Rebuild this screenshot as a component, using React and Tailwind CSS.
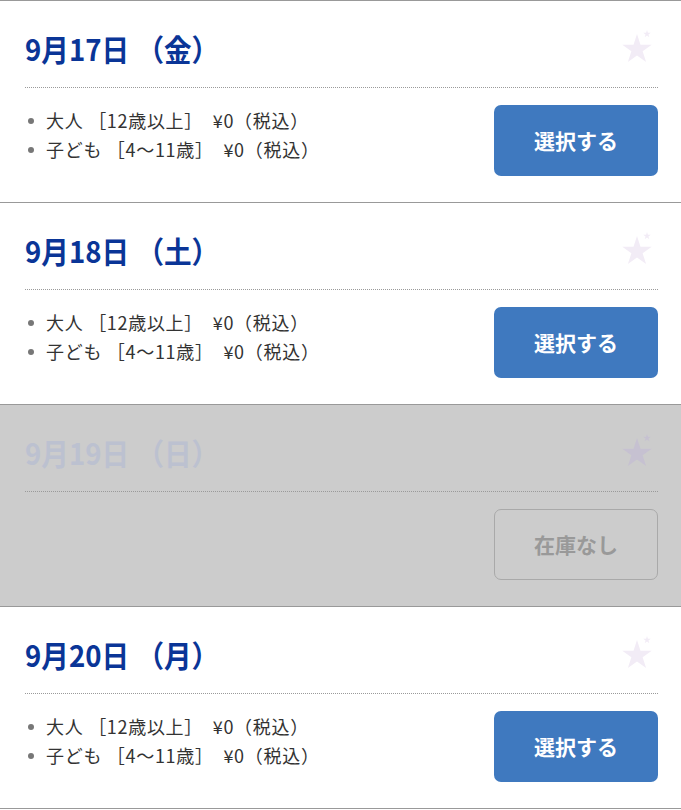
import React from 'react';

const days = [
  { date: '9月17日', week: '（金）', available: true },
  { date: '9月18日', week: '（土）', available: true },
  { date: '9月19日', week: '（日）', available: false },
  { date: '9月20日', week: '（月）', available: true },
];

const prices = ['大人 ［12歳以上］　¥0（税込）', '子ども ［4〜11歳］　¥0（税込）'];

// star mark on the right of each date
const Star = ({ color }) => (
  <svg width="34" height="36" viewBox="0 0 34 36" aria-hidden="true">
    <polygon
      points="17,6 20.48,16.71 31.74,16.71 22.63,23.33 26.11,34.04 17,27.42 7.89,34.04 11.37,23.33 2.26,16.71 13.52,16.71"
      fill={color}
    />
    <polygon
      points="27,2 27.9,4.76 30.8,4.76 28.46,6.47 29.35,9.24 27,7.53 24.65,9.24 25.54,6.47 23.2,4.76 26.1,4.76"
      fill={color}
    />
  </svg>
);

const DayCard = ({ date, week, available }) => (
  <div
    className={`${available ? 'bg-white' : 'bg-[#cccccc]'} border-t border-[#999999] pl-[25px] pr-[23px] pt-[26px] pb-[26px]`}
  >
    <div className="flex items-center justify-between h-[42px]">
      <h2
        className={`${available ? 'text-[#0a3597]' : 'text-[#bcc1d0]'} text-[30px] font-bold leading-[42px] whitespace-nowrap origin-left scale-x-[0.92]`}
      >
        {date}
        <span className="ml-[8px]">{week}</span>
      </h2>
      <div className="mr-[4px] -mt-[4px]">
        <Star color={available ? '#f2ecf6' : '#c6c1d1'} />
      </div>
    </div>
    <div className="mt-[18px] border-t border-dotted border-[#9a9a9a]" />
    <div className="mt-[17px] flex items-start justify-between">
      <ul className="pt-[1px]">
        {available &&
          prices.map((p) => (
            <li
              key={p}
              className="flex items-center text-[18px] leading-[29px] tracking-[0.7px] text-[#333333] whitespace-pre"
            >
              <span className="w-[6px] h-[6px] rounded-full bg-[#777777] ml-[3px] mr-[12px]" />
              {p}
            </li>
          ))}
      </ul>
      {available ? (
        <button className="w-[164px] h-[71px] rounded-[7px] bg-[#3f79bf] text-white text-[21px] font-bold">
          選択する
        </button>
      ) : (
        <button
          disabled
          className="w-[164px] h-[71px] rounded-[7px] border border-[#a9a9a9] text-[#999999] text-[21px] font-bold"
        >
          在庫なし
        </button>
      )}
    </div>
  </div>
);

export default function App() {
  return (
    <div
      className="w-[681px] bg-white border-b border-[#999999]"
      style={{ fontFamily: '"Noto Sans CJK JP", "Noto Sans", sans-serif' }}
    >
      {days.map((d) => (
        <DayCard key={d.date} {...d} />
      ))}
    </div>
  );
}
